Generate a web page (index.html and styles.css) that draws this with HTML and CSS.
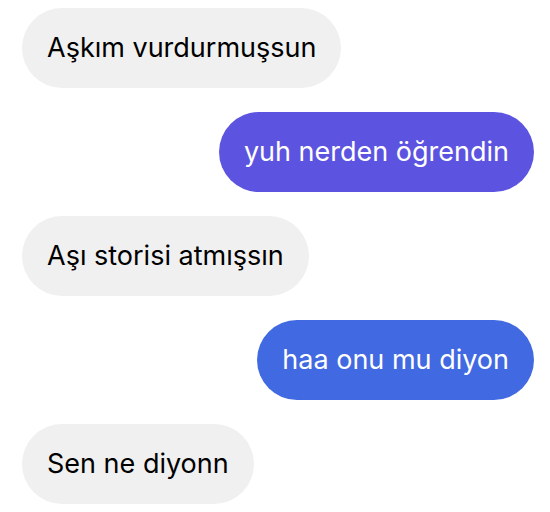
FILE: index.html
```html
<!DOCTYPE html>
<html lang="tr">
<head>
<meta charset="utf-8">
<link rel="stylesheet" href="styles.css">
</head>
<body>
<div class="chat">
  <div class="msg in">Aşkım vurdurmuşsun</div>
  <div class="msg out purple">yuh nerden öğrendin</div>
  <div class="msg in">Aşı storisi atmışsın</div>
  <div class="msg out blue">haa onu mu diyon</div>
  <div class="msg in">Sen ne diyonn</div>
</div>
</body>
</html>
```
FILE: styles.css
```css
html, body {
  margin: 0;
  padding: 0;
  background: #ffffff;
}
.chat {
  display: flex;
  flex-direction: column;
  gap: 24px;
  padding: 8px 16px 0 22px;
  font-family: "Inter", "Roboto", sans-serif;
}
.msg {
  height: 80px;
  box-sizing: border-box;
  border-radius: 40px;
  padding: 0 25px 2px;
  display: flex;
  align-items: center;
  font-size: 27px;
  letter-spacing: 0;
  white-space: nowrap;
}
.in {
  align-self: flex-start;
  background: #f0f0f0;
  color: #000000;
}
.out {
  align-self: flex-end;
  color: #ffffff;
}
.purple {
  background: #5c54e0;
}
.blue {
  background: #4169e1;
}
```
